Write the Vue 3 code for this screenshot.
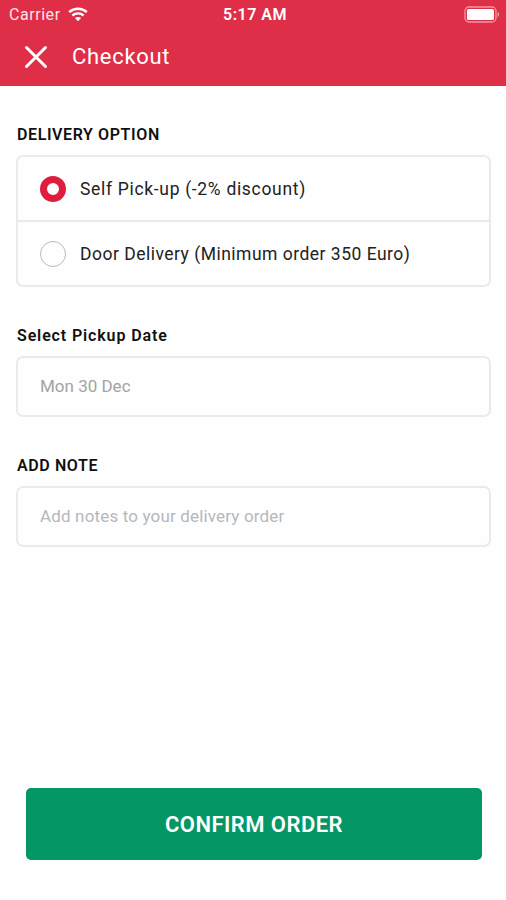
<script setup>
import { ref } from 'vue'

const options = [
  { id: 'pickup', label: 'Self Pick-up (-2% discount)' },
  { id: 'door', label: 'Door Delivery (Minimum order 350 Euro)' },
]
const selected = ref('pickup')
</script>

<template>
  <div class="screen">
    <header class="header">
      <div class="status">
        <div class="network">
          <span class="carrier">Carrier</span>
          <svg class="wifi" width="20" height="15" viewBox="0 0 20 15" fill="none">
            <path d="M1.2 5.1C6.2.6 13.8.6 18.8 5.1" stroke="#fff" stroke-width="2.6" />
            <path d="M4.4 8.5c3.2-2.9 8-2.9 11.2 0" stroke="#fff" stroke-width="2.4" />
            <path d="M6.9 11c1.8-1.5 4.4-1.5 6.2 0L10 14.2z" fill="#fff" />
          </svg>
        </div>
        <span class="time">5:17 AM</span>
        <svg class="battery" width="36" height="17" viewBox="0 0 36 17">
          <rect x="1" y="1" width="31" height="15" rx="4" fill="none" stroke="#fff" stroke-opacity=".5" stroke-width="1.3" />
          <rect x="3" y="3" width="27" height="11" rx="1.5" fill="#fff" />
          <path d="M33.5 6v5c2.2-.6 2.2-4.4 0-5z" fill="#fff" fill-opacity=".5" />
        </svg>
      </div>
      <div class="bar">
        <svg class="close" width="24" height="24" viewBox="0 0 24 24">
          <path d="M2.5 2.5l19 19M21.5 2.5l-19 19" stroke="#fff" stroke-width="3" stroke-linecap="round" />
        </svg>
        <h1 class="title">Checkout</h1>
      </div>
    </header>

    <main class="content">
      <section class="group">
        <h2 class="label delivery">DELIVERY OPTION</h2>
        <div class="options">
          <div v-for="o in options" :key="o.id" class="option" @click="selected = o.id">
            <span class="radio" :class="{ checked: selected === o.id }"></span>
            <span class="text" :class="o.id">{{ o.label }}</span>
          </div>
        </div>
      </section>
      <section class="group">
        <h2 class="label date">Select Pickup Date</h2>
        <div class="field"><span class="value">Mon 30 Dec</span></div>
      </section>
      <section class="group">
        <h2 class="label note">ADD NOTE</h2>
        <div class="field"><span class="placeholder">Add notes to your delivery order</span></div>
      </section>
    </main>

    <footer class="footer">
      <button class="confirm" type="button">CONFIRM ORDER</button>
    </footer>
  </div>
</template>

<style>
body {
  margin: 0;
  background: #fefefe;
}
</style>

<style scoped>
.screen {
  display: flex;
  flex-direction: column;
  box-sizing: border-box;
  height: 900px;
  background: #fefefe;
  color: #111;
  font-family: Roboto, sans-serif;
  white-space: nowrap;
}
.header {
  height: 86px;
  background: #df2e48;
  color: #fff;
}
.status {
  display: grid;
  grid-template-columns: 1fr auto 1fr;
  align-items: center;
  height: 28px;
  padding: 0 6px 0 9px;
}
.network {
  display: flex;
  align-items: center;
  gap: 7px;
}
.carrier {
  padding-top: 2px;
  font-size: 16px;
  line-height: 20px;
  letter-spacing: 0.55px;
  opacity: 0.88;
}
.time {
  padding: 2px 0 0 1px;
  font-size: 16px;
  line-height: 20px;
  font-weight: 600;
  letter-spacing: 0.5px;
}
.battery {
  justify-self: end;
}
.bar {
  display: flex;
  align-items: center;
  gap: 24px;
  height: 57px;
  padding-left: 24px;
}
.title {
  margin: 0;
  font-size: 22px;
  line-height: 30px;
  font-weight: 400;
  letter-spacing: 0.7px;
}
.content {
  display: flex;
  flex-direction: column;
  gap: 39px;
  flex: 1;
  padding: 39px 15px 0 16px;
}
.group {
  display: flex;
  flex-direction: column;
  gap: 10px;
}
.label {
  margin: 0 1px;
  font-size: 16px;
  line-height: 20px;
  font-weight: 600;
}
.delivery {
  letter-spacing: 0.6px;
}
.date {
  letter-spacing: 0.87px;
}
.note {
  letter-spacing: 0.6px;
}
.options,
.field {
  box-sizing: border-box;
  border: 2px solid #e8eaeb;
  border-radius: 7px;
}
.option {
  display: flex;
  align-items: center;
  gap: 14px;
  box-sizing: border-box;
  height: 63px;
  padding: 1px 0 0 22px;
}
.option + .option {
  height: 65px;
  border-top: 2px solid #e8eaeb;
}
.radio {
  box-sizing: border-box;
  width: 26px;
  height: 26px;
  border: 1.5px solid #b9bbc4;
  border-radius: 50%;
}
.radio.checked {
  border: 7px solid #df1e3e;
}
.text {
  font-size: 17.5px;
  line-height: 24px;
  color: #222;
}
.pickup {
  letter-spacing: 0.68px;
}
.door {
  letter-spacing: 0.49px;
}
.field {
  display: flex;
  align-items: center;
  height: 61px;
  padding: 0 0 2px 22px;
  font-size: 17px;
}
.value {
  color: #a3a3a3;
}
.placeholder {
  color: #b3b8bf;
  letter-spacing: 0.16px;
}
.footer {
  padding: 0 24px 40px 26px;
}
.confirm {
  display: block;
  width: 100%;
  height: 72px;
  padding: 0;
  border: 0;
  border-radius: 5px;
  background: #049765;
  color: #fff;
  font-family: inherit;
  font-size: 22px;
  font-weight: 600;
  letter-spacing: 0.45px;
}
</style>
